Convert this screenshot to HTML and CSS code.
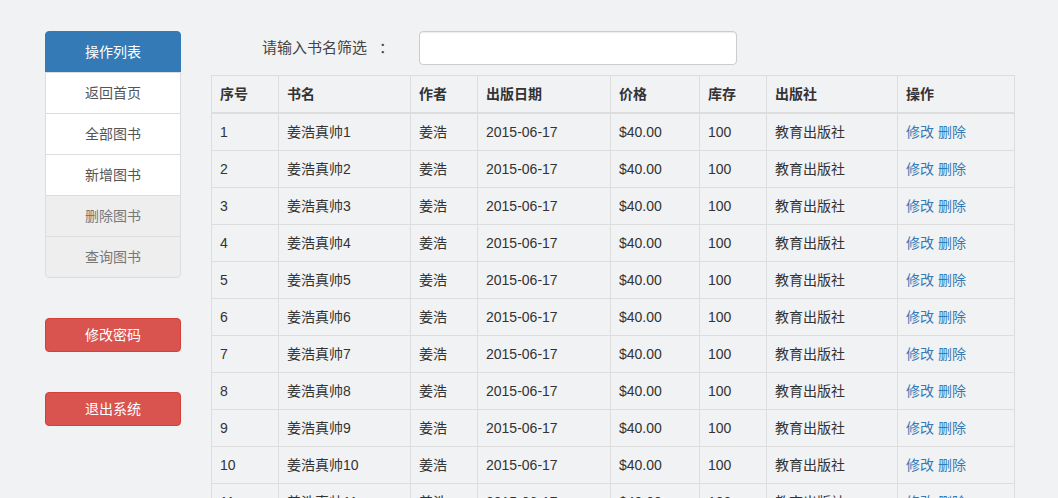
FILE: index.html
```html
<!DOCTYPE html>
<html lang="zh-CN">
<head>
<meta charset="utf-8">
<title>图书管理</title>
<link rel="stylesheet" href="styles.css">
</head>
<body>
<div class="page">
  <aside class="sidebar">
    <ul class="list-group">
      <li class="list-item active">操作列表</li>
      <li class="list-item">返回首页</li>
      <li class="list-item">全部图书</li>
      <li class="list-item">新增图书</li>
      <li class="list-item disabled">删除图书</li>
      <li class="list-item disabled">查询图书</li>
    </ul>
    <button class="btn btn-danger first-btn">修改密码</button>
    <button class="btn btn-danger second-btn">退出系统</button>
  </aside>
  <main class="content">
    <div class="filter">
      <label class="filter-label">请输入书名筛选<span class="colon">：</span></label>
      <input class="filter-input" type="text">
    </div>
    <table class="table">
      <thead>
        <tr>
          <th class="c1">序号</th><th class="c2">书名</th><th class="c3">作者</th><th class="c4">出版日期</th><th class="c5">价格</th><th class="c6">库存</th><th class="c7">出版社</th><th class="c8">操作</th>
        </tr>
      </thead>
      <tbody>
        <tr><td>1</td><td>姜浩真帅1</td><td>姜浩</td><td>2015-06-17</td><td>$40.00</td><td>100</td><td>教育出版社</td><td><a>修改</a> <a>删除</a></td></tr>
        <tr><td>2</td><td>姜浩真帅2</td><td>姜浩</td><td>2015-06-17</td><td>$40.00</td><td>100</td><td>教育出版社</td><td><a>修改</a> <a>删除</a></td></tr>
        <tr><td>3</td><td>姜浩真帅3</td><td>姜浩</td><td>2015-06-17</td><td>$40.00</td><td>100</td><td>教育出版社</td><td><a>修改</a> <a>删除</a></td></tr>
        <tr><td>4</td><td>姜浩真帅4</td><td>姜浩</td><td>2015-06-17</td><td>$40.00</td><td>100</td><td>教育出版社</td><td><a>修改</a> <a>删除</a></td></tr>
        <tr><td>5</td><td>姜浩真帅5</td><td>姜浩</td><td>2015-06-17</td><td>$40.00</td><td>100</td><td>教育出版社</td><td><a>修改</a> <a>删除</a></td></tr>
        <tr><td>6</td><td>姜浩真帅6</td><td>姜浩</td><td>2015-06-17</td><td>$40.00</td><td>100</td><td>教育出版社</td><td><a>修改</a> <a>删除</a></td></tr>
        <tr><td>7</td><td>姜浩真帅7</td><td>姜浩</td><td>2015-06-17</td><td>$40.00</td><td>100</td><td>教育出版社</td><td><a>修改</a> <a>删除</a></td></tr>
        <tr><td>8</td><td>姜浩真帅8</td><td>姜浩</td><td>2015-06-17</td><td>$40.00</td><td>100</td><td>教育出版社</td><td><a>修改</a> <a>删除</a></td></tr>
        <tr><td>9</td><td>姜浩真帅9</td><td>姜浩</td><td>2015-06-17</td><td>$40.00</td><td>100</td><td>教育出版社</td><td><a>修改</a> <a>删除</a></td></tr>
        <tr><td>10</td><td>姜浩真帅10</td><td>姜浩</td><td>2015-06-17</td><td>$40.00</td><td>100</td><td>教育出版社</td><td><a>修改</a> <a>删除</a></td></tr>
        <tr><td>11</td><td>姜浩真帅11</td><td>姜浩</td><td>2015-06-17</td><td>$40.00</td><td>100</td><td>教育出版社</td><td><a>修改</a> <a>删除</a></td></tr>
        <tr><td>12</td><td>姜浩真帅12</td><td>姜浩</td><td>2015-06-17</td><td>$40.00</td><td>100</td><td>教育出版社</td><td><a>修改</a> <a>删除</a></td></tr>
      </tbody>
    </table>
  </main>
</div>
</body>
</html>
```
FILE: styles.css
```css
html, body {
  margin: 0;
  padding: 0;
  background: #f1f2f3;
  height: 100%;
  overflow: hidden;
}
body {
  font-family: "Liberation Sans", "Noto Sans CJK SC", Arial, sans-serif;
  font-size: 14px;
  line-height: 20px;
  color: #333;
}
.page {
  display: flex;
  align-items: flex-start;
  padding: 31px 0 0 45px;
  gap: 30px;
}
.sidebar {
  width: 136px;
  flex: none;
  display: flex;
  flex-direction: column;
}
.list-group {
  list-style: none;
  margin: 0;
  padding: 0;
}
.list-item {
  display: block;
  padding: 10px 15px;
  margin-bottom: -1px;
  background: #fff;
  border: 1px solid #ddd;
  text-align: center;
  color: #555;
}
.list-item:first-child {
  border-top-left-radius: 4px;
  border-top-right-radius: 4px;
}
.list-item:last-child {
  margin-bottom: 0;
  border-bottom-left-radius: 4px;
  border-bottom-right-radius: 4px;
}
.list-item.active {
  background: #337ab7;
  border-color: #337ab7;
  color: #fff;
}
.list-item.disabled {
  background: #eee;
  color: #777;
}
.btn {
  display: block;
  width: 136px;
  height: 34px;
  padding: 6px 12px;
  font-family: inherit;
  font-size: 14px;
  line-height: 20px;
  border-radius: 4px;
  border: 1px solid transparent;
  text-align: center;
}
.btn-danger {
  background: #d9534f;
  border-color: #d43f3a;
  color: #fff;
}
.first-btn { margin-top: 40px; }
.second-btn { margin-top: 40px; }
.content {
  width: 803px;
  flex: none;
}
.filter {
  display: flex;
  align-items: center;
  height: 34px;
  margin-bottom: 10px;
}
.filter-label {
  margin-left: 51px;
  width: 157px;
  font-size: 15px;
  color: #444;
  white-space: nowrap;
}
.colon {
  margin-left: 12px;
}
.filter-input {
  box-sizing: border-box;
  width: 318px;
  height: 34px;
  margin: 0;
  padding: 6px 12px;
  border: 1px solid #ccc;
  border-radius: 4px;
  background: #fff;
  box-shadow: inset 0 1px 1px rgba(0,0,0,.075);
}
.table {
  width: 803px;
  border-collapse: collapse;
  border: 1px solid #ddd;
  table-layout: fixed;
}
.table th, .table td {
  box-sizing: border-box;
  padding: 8px;
  line-height: 20px;
  border: 1px solid #ddd;
  text-align: left;
  vertical-align: top;
  white-space: nowrap;
  overflow: hidden;
}
.table th {
  font-weight: bold;
  border-bottom-width: 2px;
}
.c1 { width: 67px; }
.c2 { width: 132px; }
.c3 { width: 67px; }
.c4 { width: 133px; }
.c5 { width: 89px; }
.c6 { width: 67px; }
.c7 { width: 131px; }
.c8 { width: 117px; }
.table a {
  color: #337ab7;
  text-decoration: none;
}
```
